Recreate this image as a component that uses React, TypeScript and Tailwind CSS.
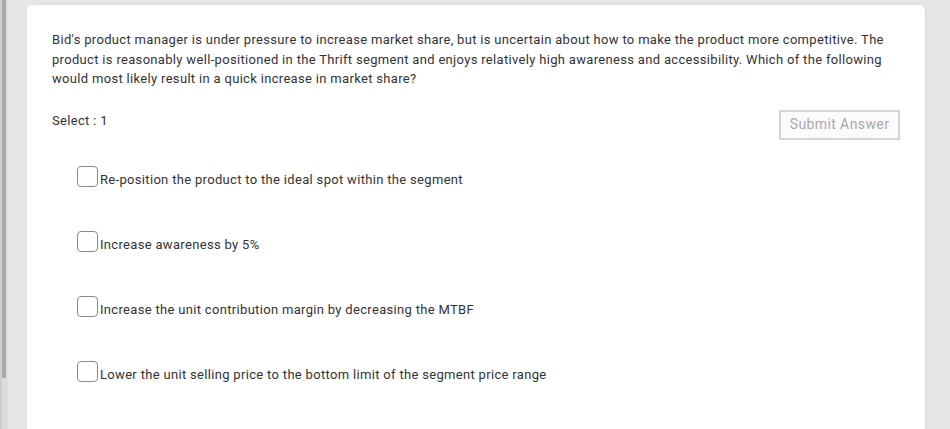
import React from "react";

const options = [
  "Re-position the product to the ideal spot within the segment",
  "Increase awareness by 5%",
  "Increase the unit contribution margin by decreasing the MTBF",
  "Lower the unit selling price to the bottom limit of the segment price range",
];

export default function App() {
  return (
    <div
      className="flex h-[429px] w-[950px] overflow-hidden bg-[#e6e6e6]"
      style={{ fontFamily: "Roboto, 'Liberation Sans', sans-serif" }}
    >
      <div className="flex h-full w-[8px] shrink-0 bg-[#dcdcdc]">
        <div className="h-full w-[2px] bg-[#cfcfcf]" />
        <div className="h-[378px] w-[4px] bg-[#a9a9a9]" />
      </div>
      <div className="ml-[19px] mt-[5px] h-[440px] w-[898px] shrink-0 rounded-[5px] bg-white px-[25px] pt-[25px] shadow-[1px_0_2px_rgba(0,0,0,0.08)]">
        <p className="text-[13px] leading-[19.5px] tracking-[0.32px] text-[#333]">
          Bid's product manager is under pressure to increase market share, but is uncertain about how to make the product more competitive. The product is reasonably well-positioned in the Thrift segment and enjoys relatively high awareness and accessibility. Which of the following would most likely result in a quick increase in market share?
        </p>
        <div className="mt-[21px] flex items-start justify-between">
          <span className="mt-[1px] text-[13px] leading-[19.5px] tracking-[0.32px] text-[#333]">Select : 1</span>
          <button className="h-[30px] w-[121px] border-2 border-[#d4d4d4] bg-[#fbfbfb] text-[14px] tracking-[0.4px] text-[#aaaaaa]">
            Submit Answer
          </button>
        </div>
        <div className="mt-[26px] flex flex-col gap-[44px] pl-[25px]">
          {options.map((o) => (
            <label key={o} className="flex items-end">
              <span className="h-[21px] w-[21px] shrink-0 rounded-[4px] border border-[#8a8a8a] bg-white" />
              <span className="ml-[2px] text-[13px] leading-[15px] tracking-[0.32px] text-[#333]">{o}</span>
            </label>
          ))}
        </div>
      </div>
    </div>
  );
}
